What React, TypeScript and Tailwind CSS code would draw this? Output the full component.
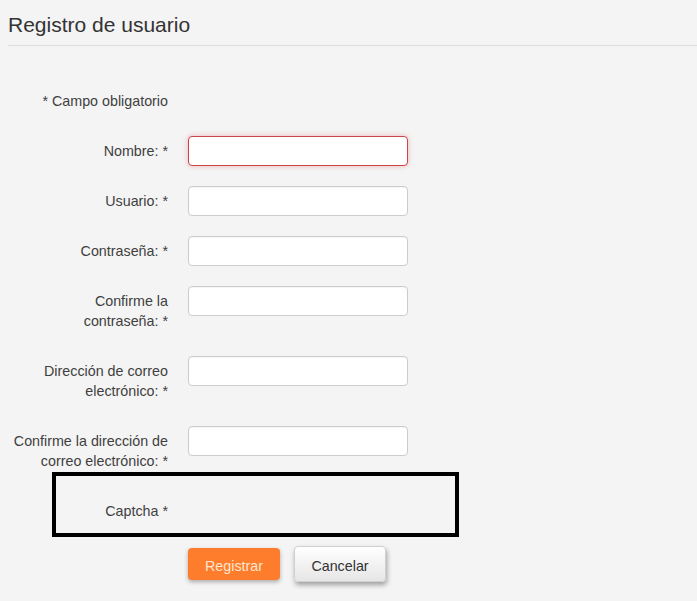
import React from "react";

function Row({ label, invalid, last }: { label: React.ReactNode; invalid?: boolean; last?: boolean }) {
  return (
    <div className={`flex gap-5 ${last ? "" : "mb-5"}`}>
      <label className={`w-[168px] shrink-0 text-right leading-5 pt-[5px] whitespace-nowrap ${last ? "" : "pb-[5px]"}`}>
        {label}
      </label>
      <input
        type="text"
        className={`w-[220px] h-[30px] rounded-[4px] bg-white border outline-none px-2 ${
          invalid
            ? "border-[#c9474a] shadow-[0_0_5px_rgba(230,60,60,0.35)]"
            : "border-[#cccccc] shadow-[inset_0_1px_1px_rgba(0,0,0,0.04)]"
        }`}
      />
    </div>
  );
}

export default function App() {
  return (
    <div className="min-h-screen bg-[#f4f4f4] font-['Liberation_Sans',Arial,sans-serif] text-[14.3px] text-[#3f3f3f]">
      <div className="pl-2">
        <h1 className="text-[21px] leading-6 text-[#333] pt-[13px] pb-2 border-b border-[#dddddd] font-normal">
          Registro de usuario
        </h1>
      </div>
      <div className="pt-[45px]">
        <div className="flex mb-[25px]">
          <div className="w-[168px] text-right leading-5">* Campo obligatorio</div>
        </div>
        <Row label="Nombre: *" invalid />
        <Row label="Usuario: *" />
        <Row label="Contraseña: *" />
        <Row
          label={
            <>
              Confirme la
              <br />
              contraseña: *
            </>
          }
        />
        <Row
          label={
            <>
              Dirección de correo
              <br />
              electrónico: *
            </>
          }
        />
        <Row
          last
          label={
            <>
              Confirme la dirección de
              <br />
              correo electrónico: *
            </>
          }
        />
        <div className="ml-[52px] mt-px w-[407px] h-[65px] border-4 border-black">
          <div className="w-[112px] text-right leading-5 pt-[25px]">Captcha *</div>
        </div>
        <div className="ml-[188px] mt-[9px] flex items-center gap-[14px]">
          <button className="w-[92px] h-[32px] pt-[5px] rounded-[4px] bg-[#fd7d2c] text-[#ffe6cf] shadow-[0_2px_4px_rgba(0,0,0,0.3)]">
            Registrar
          </button>
          <button className="w-[92px] h-[36px] pt-[6px] rounded-[4px] border border-[#d0d0d0] bg-gradient-to-b from-white to-[#e6e6e6] text-[#333] shadow-[1px_3px_5px_rgba(0,0,0,0.35)]">
            Cancelar
          </button>
        </div>
      </div>
    </div>
  );
}
